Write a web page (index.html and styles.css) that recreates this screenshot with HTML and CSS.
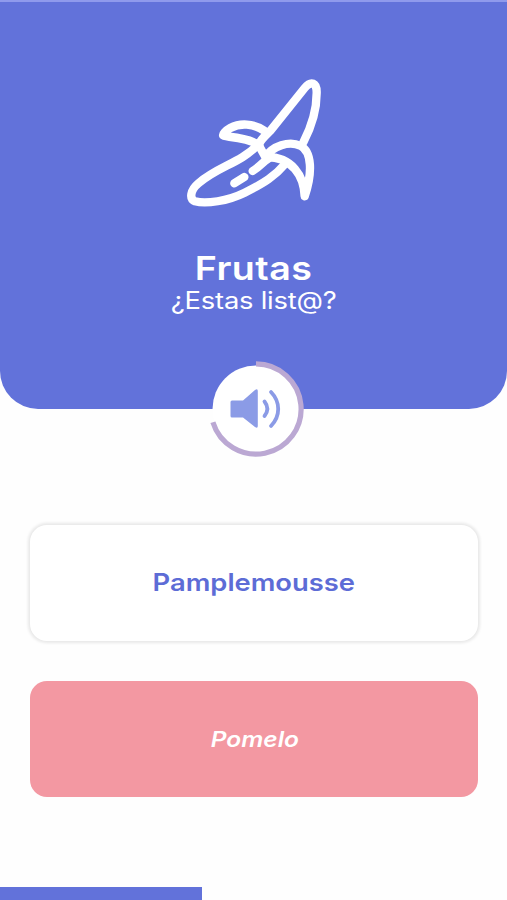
FILE: index.html
```
<!DOCTYPE html>
<html lang="es">
<head>
    <meta charset="UTF-8">
    <meta name="viewport" content="width=device-width, initial-scale=1.0">
    <title>Frutas</title>

    <link rel="stylesheet" href="styles.css">
</head>
<body>
    <header class="top">
        <svg class="banana" viewBox="0 0 510 465">
            <path d="M265 240 C275 219 292 207 302 196 L404 69 C423 46 441 52 440 84 C440 139 422 190 400 232"/>
            <path d="M283 197 C250 175 210 173 181 189 C165 198 157 208 160 212 C163 217 227 213 268 241"/>
            <path d="M262 241 C208 296 148 302 85 355 C61 375 57 402 75 409 C108 418 173 408 224 383 C283 354 315 333 347 295"/>
            <path d="M266 240 L286 276 C308 243 357 226 391 242 C426 260 428 323 404 394 C402 332 366 276 290 276"/>
            <path d="M193 355 L223 336 M248 318 C269 306 279 290 295 281"/>
        </svg>
        <h1 class="title">Frutas</h1>
        <p class="subtitle">¿Estas list@?</p>
        <button class="audio" type="button" aria-label="Escuchar">
            <svg viewBox="0 0 96 96">
                <circle class="disc" cx="48" cy="48" r="43.5"/>
                <path class="ring" d="M48 2.9 A45.1 45.1 0 1 1 4.9 61.3"/>
                <path class="speaker" d="M24 39.5 H35 L47 29 Q49.8 27 49.8 30 V65 Q49.8 68 47 66 L35 56.5 H24 Q22.5 56.5 22.5 55 V41 Q22.5 39.5 24 39.5 Z"/>
                <path class="wave" d="M56.5 40.5 Q62.2 47.8 56.5 55 M63 31 C72.6 41 72.6 55 63 65"/>
            </svg>
        </button>
    </header>

    <main class="cards">
        <div class="card word"><span>Pamplemousse</span></div>
        <div class="card answer"><span>Pomelo</span></div>
    </main>

    <div class="progress">
        <div class="bar" style="width: 39.84%"></div>
    </div>
</body>
</html>
```

FILE: styles.css
```
*{
    margin: 0;
    padding: 0;
    box-sizing: border-box;
    font-family: Inter, 'Open Sans', sans-serif;
}

body{
    width: 100%;
    height: 100vh;
    display: flex;
    flex-direction: column;
    background: #fefefe;
    overflow: hidden;
}

.top{
    position: relative;
    height: 409px;
    flex-shrink: 0;
    display: flex;
    flex-direction: column;
    align-items: center;
    padding-top: 63px;
    background: #6272da;
    color: #fff;
    border-top: 2px solid #8f9aec;
    border-radius: 0 0 38px 38px;
}

.banana{
    width: 170px;
    height: 155px;
    margin-left: 3px;
    fill: none;
    stroke: #fff;
    stroke-width: 25;
    stroke-linecap: round;
    stroke-linejoin: round;
}

/* wide letters */
.title, .subtitle, .card span{
    transform: scaleX(1.14);
}

.title{
    margin-top: 28px;
    font-size: 33px;
    line-height: 40px;
    font-weight: 600;
    letter-spacing: 0.4px;
}

.subtitle{
    font-size: 24px;
    line-height: 26px;
    font-weight: 400;
    letter-spacing: -0.2px;
}

/* sits over the bottom edge of the header */
.audio{
    position: absolute;
    left: 50%;
    bottom: -48px;
    width: 96px;
    height: 96px;
    margin-left: -45.5px;
    background: none;
    border: none;
    cursor: pointer;
}
.audio svg{
    display: block;
}
.disc{
    fill: #fff;
}
.ring{
    fill: none;
    stroke: #bba8d3;
    stroke-width: 5.2;
}
.speaker{
    fill: #8b9be6;
}
.wave{
    fill: none;
    stroke: #8b9be6;
    stroke-width: 3.8;
    stroke-linecap: round;
}

.cards{
    flex: 1;
    display: flex;
    flex-direction: column;
    gap: 40px;
    padding: 116px 29.5px 0 30px;
}
.card{
    height: 116px;
    display: flex;
    align-items: center;
    justify-content: center;
    border-radius: 17px;
}
.word{
    padding-bottom: 2px;
    background: #fff;
    box-shadow: 0 0 3px 2px #e8e8e8;
    color: #5d6cd6;
    font-size: 24px;
    font-weight: 600;
}
.answer{
    background: #f398a2;
    color: #fff;
    font-size: 21.5px;
    font-style: italic;
    font-weight: 600;
}
.answer span{
    padding-left: 2px;
}

.progress{
    height: 13px;
    flex-shrink: 0;
}
.bar{
    height: 100%;
    background: #6272da;
}
```
